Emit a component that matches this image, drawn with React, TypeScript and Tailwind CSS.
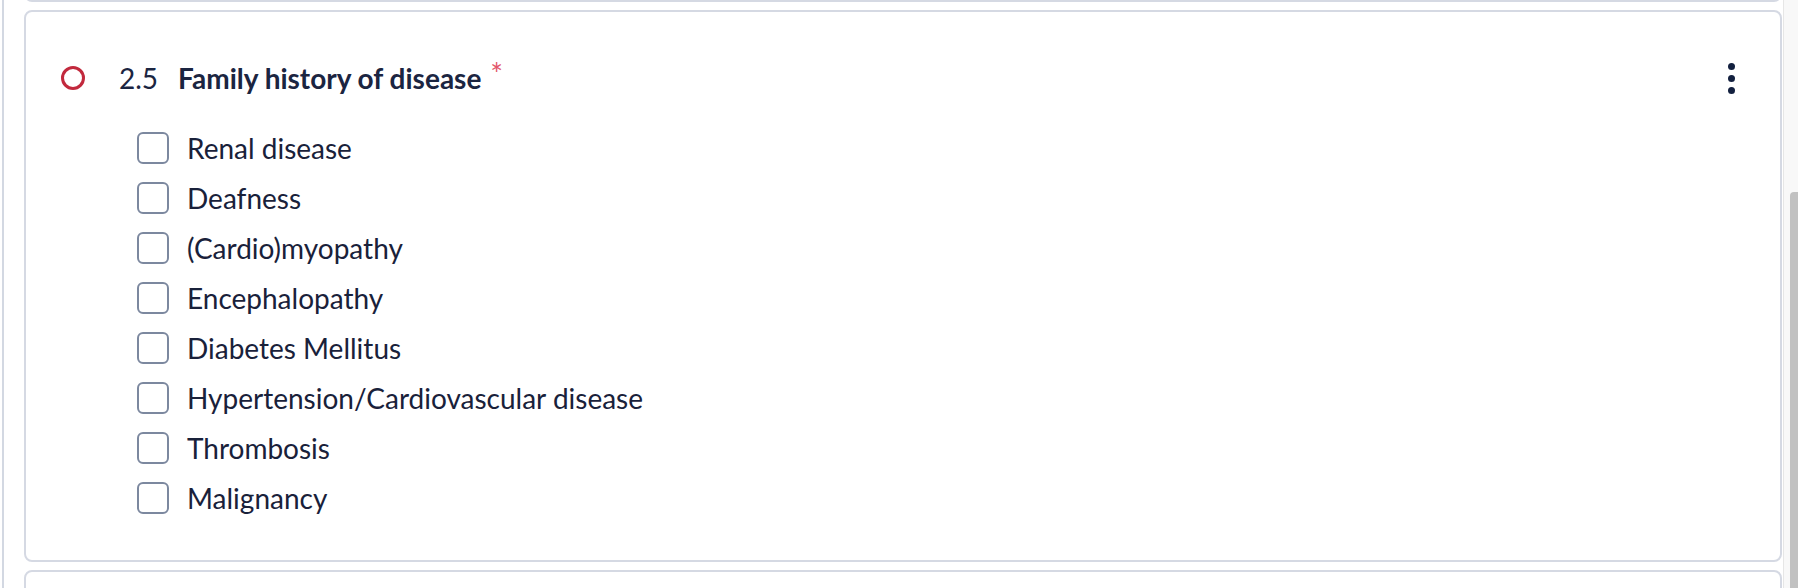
import React from 'react';

const options = [
  'Renal disease',
  'Deafness',
  '(Cardio)myopathy',
  'Encephalopathy',
  'Diabetes Mellitus',
  'Hypertension/Cardiovascular disease',
  'Thrombosis',
  'Malignancy',
];

const font = { fontFamily: 'Lato, "Open Sans", sans-serif' };

const Checkbox: React.FC<{ label: string }> = ({ label }) => (
  <label className="flex h-[50px] items-center gap-[18px] cursor-pointer">
    <span className="block w-[32px] h-[32px] shrink-0 rounded-[6px] border-2 border-[#7c889f] bg-white" />
    <span className="text-[28px] leading-none text-[#19213a]">{label}</span>
  </label>
);

const QuestionCard: React.FC = () => (
  <div className="h-[552px] shrink-0 rounded-[8px] border-2 border-[#d5d9e3] bg-white pl-[35px] pr-[41px] pt-[44px]">
    <div className="flex h-[44px] items-center">
      <span className="block w-[24px] h-[24px] rounded-full border-[3px] border-[#c2293d]" />
      <span className="ml-[34px] text-[28px] text-[#1b2541]">2.5</span>
      <span className="ml-[20px] text-[28px] font-bold text-[#1b2541]">Family history of disease</span>
      <span className="ml-[9px] self-start mt-[2px] text-[30px] leading-none text-[#e2576b]">*</span>
      <button className="ml-auto flex flex-col items-center gap-[5px] px-[4px]" title="More">
        <span className="block w-[7px] h-[7px] rounded-full bg-[#13203f]" />
        <span className="block w-[7px] h-[7px] rounded-full bg-[#13203f]" />
        <span className="block w-[7px] h-[7px] rounded-full bg-[#13203f]" />
      </button>
    </div>
    <div className="mt-[23px] ml-[76px] flex flex-col">
      {options.map((o) => (
        <Checkbox key={o} label={o} />
      ))}
    </div>
  </div>
);

export default function App() {
  return (
    <div className="flex w-full h-[588px] overflow-hidden bg-white" style={font}>
      <div className="flex-1 ml-[2px] border-l-2 border-[#d3d8e2] pl-[20px] pr-[1px] flex flex-col gap-[8px]">
        <div className="h-[32px] -mt-[30px] shrink-0 rounded-[8px] border-2 border-[#d5d9e3] bg-white" />
        <QuestionCard />
        <div className="h-[40px] shrink-0 rounded-[8px] border-2 border-[#d5d9e3] bg-white" />
      </div>
      <div className="w-[15px] shrink-0 border-l border-[#e6e6e6] bg-[#f8f8f8] pt-[192px] pl-[6px]">
        <div className="h-full rounded-tl-[4px] bg-[#c1c1c1]" />
      </div>
    </div>
  );
}
